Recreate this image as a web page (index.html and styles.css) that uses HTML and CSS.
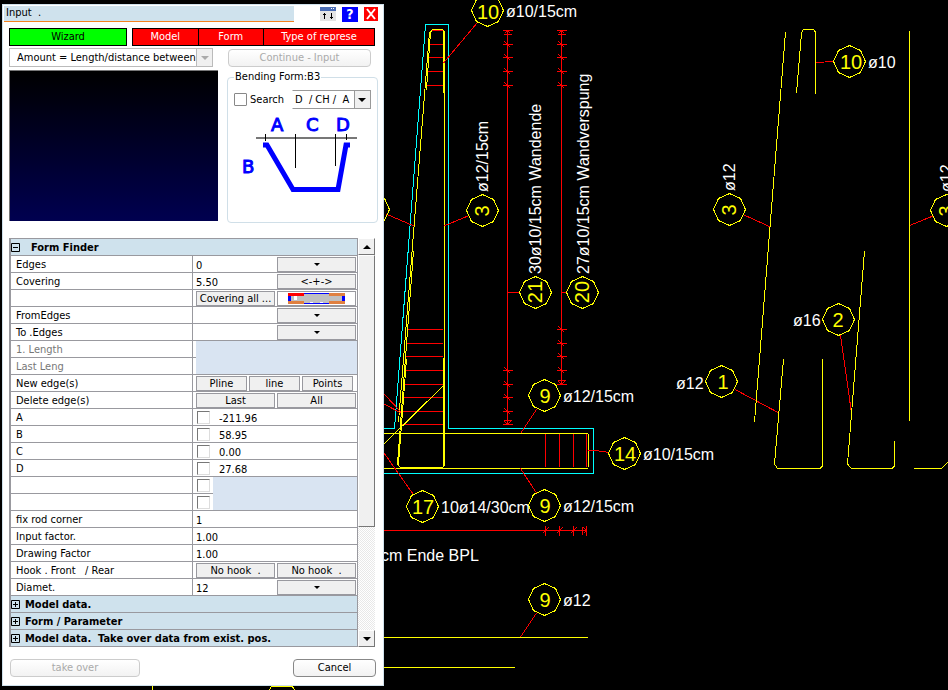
FILE: index.html
```html
<!DOCTYPE html>
<html lang="en">
<head>
    <meta charset="UTF-8">
    <meta name="viewport" content="width=device-width, initial-scale=1.0">
    <title>Input</title>
    <link rel="stylesheet" href="styles.css">
</head>
<body>
    <svg class="drawing" aria-label="Drawing">
        <defs>
            <path id="mark" d="M0-16L11-11L16 0L11 11L0 16L-11 11L-16 0L-11-11Z"/>
            <path id="tick" d="M-5 0H5M-3-3L3 3"/>
            <path id="tick-end" d="M-5 0H5M-4 4H4M-3 3L0 0L3 3"/>
        </defs>

        <!-- concrete outline -->
        <path class="cyan" d="M380 428.5H394.5L425.5 24.5H448.5V428.5H593.5V473.5H380"/>

        <!-- stirrups -->
        <path class="red" d="M431 30.5H443M429 44.5H443M428 57.5H443M427 71.5H443M426 85.5H443"/>
        <path class="red" d="M408 329.5H443M407 343.5H443M405 356.5H443M404 370.5H443M403 384.5H443M402 397.5H443M401 411.5H443M400 424.5H443"/>
        <path class="red" d="M545.5 434V467M559.5 434V467M573.5 434V467M586.5 434V467"/>

        <!-- bars in the section -->
        <path class="yellow" d="M429.5 32L398.5 422M444.5 32V466M443.5 32V93M443.5 358V467"/>
        <path class="yellow" d="M426.5 90L430.5 32L432.5 29.5H442.5L444.5 32"/>
        <path class="yellow" d="M413.5 251L397.5 464L400.5 467.5H442.5L444.5 465"/>
        <path class="yellow" d="M406.5 359L398.5 464"/>
        <path class="yellow" d="M380 433.5H588M380 468.5H588M588.5 434V467M384 444L443.5 385.5"/>

        <!-- leaders -->
        <path class="red" d="M477 23L443.5 63M468 216L444 226M386 214L414 226M384 394L401 412M384 404L401 413"/>
        <path class="red" d="M536.5 409.5L520.5 433.5M520.5 468.5L536.5 493M384 453L413 494M588 450.5H596L609 452.5M536.5 613L520.5 637"/>
        <path class="red" d="M815.5 62.5L834 61.5M744 215L770.5 227M909.5 225.5L933 216M840.5 335L851.5 413M735 389.5L779 413"/>

        <!-- dimension chains -->
        <path class="red" d="M507.5 30V424M561.5 30V384M507 292.5H519M561 292.5H567M380 530.5H587"/>
        <g class="red">
            <use href="#tick-end" x="507.5" y="30.5"/>
            <use href="#tick" x="507.5" y="44.5"/>
            <use href="#tick" x="507.5" y="57.5"/>
            <use href="#tick" x="507.5" y="71.5"/>
            <use href="#tick" x="507.5" y="85.5"/>
            <use href="#tick" x="507.5" y="370.5"/>
            <use href="#tick" x="507.5" y="384.5"/>
            <use href="#tick" x="507.5" y="397.5"/>
            <use href="#tick" x="507.5" y="411.5"/>
            <use href="#tick-end" transform="translate(507.5 424.5) scale(1 -1)"/>
            <use href="#tick-end" x="561.5" y="30.5"/>
            <use href="#tick" x="561.5" y="44.5"/>
            <use href="#tick" x="561.5" y="57.5"/>
            <use href="#tick" x="561.5" y="71.5"/>
            <use href="#tick" x="561.5" y="85.5"/>
            <use href="#tick" x="561.5" y="329.5"/>
            <use href="#tick" x="561.5" y="343.5"/>
            <use href="#tick" x="561.5" y="356.5"/>
            <use href="#tick" x="561.5" y="370.5"/>
            <use href="#tick-end" transform="translate(561.5 384.5) scale(1 -1)"/>
            <use href="#tick" transform="translate(545.5 530.5) rotate(-90)"/>
            <use href="#tick" transform="translate(559.5 530.5) rotate(-90)"/>
            <use href="#tick" transform="translate(573.5 530.5) rotate(-90)"/>
            <use href="#tick-end" transform="translate(586.5 530.5) rotate(90)"/>
        </g>

        <!-- bars drawn out -->
        <path class="yellow" d="M380 637.5H588M380 667.5H515M152.5 685V690M269.5 690L271.5 686.5H292.5L294.5 690"/>
        <path class="yellow" d="M785.5 32L754.5 422M909.5 31V421"/>
        <path class="yellow" d="M796.5 93L801.5 33L803.5 29.5H813.5L815.5 32V94"/>
        <path class="yellow" d="M783.5 359L774.5 464L777.5 468.5H820L822.5 466V359"/>
        <path class="yellow" d="M864.5 251L847.5 464L851.5 468.5H892L894.5 466V441"/>
        <path class="yellow" d="M914 468.5H941.5L949 461"/>

        <!-- position marks -->
        <g class="yellow">
            <use href="#mark" x="487.5" y="10.5"/>
            <use href="#mark" x="373.5" y="209.5"/>
            <use href="#mark" x="482.5" y="210.5"/>
            <use href="#mark" x="535.5" y="292.5"/>
            <use href="#mark" x="582.5" y="292.5"/>
            <use href="#mark" x="544.5" y="395.5"/>
            <use href="#mark" x="624.5" y="453.5"/>
            <use href="#mark" x="422.5" y="506.5"/>
            <use href="#mark" x="544.5" y="505.5"/>
            <use href="#mark" x="544.5" y="599.5"/>
            <use href="#mark" x="849.5" y="61.5"/>
            <use href="#mark" x="729.5" y="209.5"/>
            <use href="#mark" x="946.5" y="210.5"/>
            <use href="#mark" x="838.5" y="319.5"/>
            <use href="#mark" x="721.5" y="381.5"/>
        </g>
        <g class="pos">
            <text x="488" y="19">10</text>
            <text x="545" y="403">9</text>
            <text x="625" y="461">14</text>
            <text x="423" y="514">17</text>
            <text x="545" y="513">9</text>
            <text x="545" y="607">9</text>
            <text x="851" y="69">10</text>
            <text x="838" y="327">2</text>
            <text x="723" y="389">1</text>
            <text transform="translate(489 211) rotate(-90)">3</text>
            <text transform="translate(542 292) rotate(-90)">21</text>
            <text transform="translate(589 292) rotate(-90)">20</text>
            <text transform="translate(736 210) rotate(-90)">3</text>
            <text transform="translate(953 211) rotate(-90)">3</text>
        </g>
        <g class="note">
            <text x="506" y="17">ø10/15cm</text>
            <text x="563" y="402">ø12/15cm</text>
            <text x="643" y="460">ø10/15cm</text>
            <text x="441" y="513">10ø14/30cm</text>
            <text x="563" y="512">ø12/15cm</text>
            <text x="381" y="561">cm Ende BPL</text>
            <text x="563" y="606">ø12</text>
            <text x="868" y="68">ø10</text>
            <text x="793" y="326">ø16</text>
            <text x="676" y="389">ø12</text>
            <text transform="translate(488 192) rotate(-90)">ø12/15cm</text>
            <text transform="translate(541 274) rotate(-90)">30ø10/15cm Wandende</text>
            <text transform="translate(589 274) rotate(-90)">27ø10/15cm Wandverspung</text>
            <text transform="translate(735 191) rotate(-90)">ø12</text>
            <text transform="translate(952 192) rotate(-90)">ø12</text>
        </g>
    </svg>

    <div class="dialog">
        <div class="titlebar">
            <div class="title">Input&nbsp; .</div>
            <div class="title-buttons">
                <button class="roll" aria-label="Roll up">
                    <svg width="16" height="14"><path fill="#e4e4e4" d="M0 0H16V14H0Z"/><path fill="#4a6db5" d="M0 0H16V4H0Z"/><path fill="#fff" d="M11 1H12V2H11ZM13 1H14V2H13Z"/><path fill="#000" d="M4 6H5V12H4ZM3 7H6V8H3ZM11 6H12V12H11ZM10 10H13V11H10Z"/></svg>
                </button>
                <button class="help" aria-label="Help">?</button>
                <button class="close" aria-label="Close">
                    <svg width="14" height="14"><path stroke="#fff" stroke-width="2" d="M3 2L11 12M11 2L3 12"/></svg>
                </button>
            </div>
        </div>

        <div class="tabs">
            <button class="tab wizard">Wizard</button>
            <div class="tab-group">
                <button class="tab">Model</button>
                <button class="tab">Form</button>
                <button class="tab wide">Type of represe</button>
            </div>
        </div>

        <div class="top">
            <div class="left">
                <div class="combo disabled">
                    <select aria-label="Amount"><option>Amount = Length/distance between</option></select>
                    <span class="arrow"></span>
                </div>
                <div class="preview"></div>
            </div>
            <div class="right">
                <button class="button" disabled>Continue - Input</button>
                <fieldset class="bending">
                    <legend>Bending Form:B3</legend>
                    <div class="search">
                        <input type="checkbox" id="search">
                        <label for="search">Search</label>
                        <div class="combo">
                            <select aria-label="Shape"><option>D&nbsp; / CH /&nbsp; A</option></select>
                            <span class="arrow"></span>
                        </div>
                    </div>
                    <svg class="shape" width="130" height="84" viewBox="0 0 130 84">
                        <path stroke="#777" stroke-width="2" d="M20 27H121"/>
                        <path stroke="#000" d="M29.500 23V30M59.500 23V57M99.500 23V55M110.500 23V29"/>
                        <path fill="none" stroke="#00f" stroke-width="5" d="M27 34H31L57 78.500H102L110 34H114"/>
                        <text x="35" y="20">A</text>
                        <text x="70" y="20">C</text>
                        <text x="100" y="20">D</text>
                        <text x="6" y="62">B</text>
                    </svg>
                </fieldset>
            </div>
        </div>

        <div class="grid">
            <table>
                <colgroup><col class="names"><col></colgroup>
                <tr class="category"><th colspan="2"><button class="toggle open"><svg width="9" height="9"><path d="M.5 .5H8.500V8.500H.5ZM2 4.500H7"/></svg>Form Finder</button></th></tr>
                <tr>
                    <td><label for="edges">Edges</label></td>
                    <td><div class="cell"><input type="text" id="edges" value="0"><button class="small" aria-label="Edges list"><i></i></button></div></td>
                </tr>
                <tr>
                    <td><label for="covering">Covering</label></td>
                    <td><div class="cell"><input type="text" id="covering" value="5.50"><button class="small">&lt;-+-&gt;</button></div></td>
                </tr>
                <tr>
                    <td></td>
                    <td><div class="cell"><button class="small">Covering all ...</button><button class="small image" aria-label="Covering picture">
                        <svg width="57" height="11"><path fill="#c0c0c0" d="M0 0H57V11H0Z"/><path fill="#f00" d="M0 0H16V3H0Z"/><path fill="#e08040" d="M41 0H57V3H41ZM0 8H16V11H0ZM41 8H57V11H41Z"/><path fill="#00f" d="M0 3H3V8H0ZM54 3H57V8H54ZM16 0H41V1H16ZM16 10H41V11H16Z"/><path fill="#fff" d="M6 3H9V7H6ZM22 9H25V10H22ZM32 9H35V10H32Z"/></svg>
                    </button></div></td>
                </tr>
                <tr>
                    <td><label for="from">FromEdges</label></td>
                    <td><div class="cell"><input type="text" id="from"><button class="small" aria-label="From list"><i></i></button></div></td>
                </tr>
                <tr>
                    <td><label for="to">To .Edges</label></td>
                    <td><div class="cell"><input type="text" id="to"><button class="small" aria-label="To list"><i></i></button></div></td>
                </tr>
                <tr class="off"><td>1. Length</td><td><div class="cell"><span class="fill join"></span></div></td></tr>
                <tr class="off"><td>Last Leng</td><td><div class="cell"><span class="fill"></span></div></td></tr>
                <tr>
                    <td>New edge(s)</td>
                    <td><div class="cell three"><button class="small">Pline</button><button class="small">line</button><button class="small">Points</button></div></td>
                </tr>
                <tr>
                    <td>Delete edge(s)</td>
                    <td><div class="cell"><button class="small">Last</button><button class="small">All</button></div></td>
                </tr>
                <tr>
                    <td><label for="a">A</label></td>
                    <td><div class="cell check"><input type="checkbox" aria-label="Lock A"><input type="text" id="a" value="-211.96"></div></td>
                </tr>
                <tr>
                    <td><label for="b">B</label></td>
                    <td><div class="cell check"><input type="checkbox" aria-label="Lock B"><input type="text" id="b" value="58.95"></div></td>
                </tr>
                <tr>
                    <td><label for="c">C</label></td>
                    <td><div class="cell check"><input type="checkbox" aria-label="Lock C"><input type="text" id="c" value="0.00"></div></td>
                </tr>
                <tr>
                    <td><label for="d">D</label></td>
                    <td><div class="cell check"><input type="checkbox" aria-label="Lock D"><input type="text" id="d" value="27.68"></div></td>
                </tr>
                <tr><td></td><td><div class="cell check"><input type="checkbox" aria-label="Lock 5"><span class="fill join"></span></div></td></tr>
                <tr><td></td><td><div class="cell check"><input type="checkbox" aria-label="Lock 6"><span class="fill"></span></div></td></tr>
                <tr>
                    <td><label for="corner">fix rod corner</label></td>
                    <td><div class="cell"><input type="text" id="corner" value="1"></div></td>
                </tr>
                <tr>
                    <td><label for="factor">Input factor.</label></td>
                    <td><div class="cell"><input type="text" id="factor" value="1.00"></div></td>
                </tr>
                <tr>
                    <td><label for="drawfactor">Drawing Factor</label></td>
                    <td><div class="cell"><input type="text" id="drawfactor" value="1.00"></div></td>
                </tr>
                <tr>
                    <td>Hook . Front &nbsp; / Rear</td>
                    <td><div class="cell"><button class="small">No hook &nbsp;.</button><button class="small">No hook &nbsp;.</button></div></td>
                </tr>
                <tr>
                    <td><label for="diamet">Diamet.</label></td>
                    <td><div class="cell"><input type="text" id="diamet" value="12"><button class="small" aria-label="Diameter list"><i></i></button></div></td>
                </tr>
                <tr class="category"><th colspan="2"><button class="toggle"><svg width="9" height="9"><path d="M.5 .5H8.500V8.500H.5ZM2 4.500H7M4.500 2V7"/></svg>Model data.</button></th></tr>
                <tr class="category"><th colspan="2"><button class="toggle"><svg width="9" height="9"><path d="M.5 .5H8.500V8.500H.5ZM2 4.500H7M4.500 2V7"/></svg>Form / Parameter</button></th></tr>
                <tr class="category"><th colspan="2"><button class="toggle"><svg width="9" height="9"><path d="M.5 .5H8.500V8.500H.5ZM2 4.500H7M4.500 2V7"/></svg>Model data.&nbsp; Take over data from exist. pos.</button></th></tr>
            </table>
            <div class="scrollbar">
                <button aria-label="Scroll up"><i class="up"></i></button>
                <div class="thumb"></div>
                <button class="last" aria-label="Scroll down"><i></i></button>
            </div>
        </div>

        <div class="footer">
            <button class="button take" disabled>take over</button>
            <button class="button cancel">Cancel</button>
        </div>
    </div>
</body>
</html>
```

FILE: styles.css
```css
* {
    box-sizing: border-box;
}

body {
    margin: 0;
    padding: 4px 2px;
    min-height: 100vh;
    background-color: #000;
    color: #000;
    font-family: "DejaVu Sans Condensed", "DejaVu Sans", sans-serif;
    font-size: 11px;
    line-height: 16px;
}

button,
input,
select {
    margin: 0;
    padding: 0;
    border: 0;
    font: inherit;
    color: inherit;
}

svg {
    display: block;
}

/* drawing behind the dialog */

.drawing {
    position: absolute;
    top: 0;
    left: 0;
    width: 100%;
    height: 100%;
    font-family: "Liberation Sans", Arial, sans-serif;
}

.cyan,
.red,
.yellow {
    fill: none;
    stroke-width: 1px;
    shape-rendering: crispEdges;
}

.cyan {
    stroke: #0ff;
}

.red {
    stroke: #f00;
}

.yellow {
    stroke: #ff0;
}

.pos {
    fill: #ff0;
    font-size: 20px;
    text-anchor: middle;
}

.note {
    fill: #fff;
    font-size: 16px;
}

/* dialog */

.dialog {
    position: relative;
    width: 382px;
    padding: 1px 0 8px;
    background-color: #fff;
    border: 1px solid #cfe1ec;
}

.titlebar {
    display: flex;
    justify-content: space-between;
    padding: 0 5px 0 1px;
}

.title {
    width: 290px;
    height: 16px;
    padding-left: 2px;
    line-height: 14px;
    background-color: #cfe2ed;
    border-bottom: 1px solid #f58220;
}

.title-buttons {
    display: flex;
    gap: 6px;
    padding-top: 1px;
}

.help {
    width: 16px;
    height: 15px;
    background-color: #00f;
    color: #fff;
    font-size: 14px;
    font-weight: bold;
    line-height: 15px;
}

.roll {
    height: 14px;
}

.close {
    height: 14px;
    background-color: #f00;
}

.tabs {
    display: flex;
    gap: 5px;
    padding: 6px 8px 0 6px;
}

.tab {
    flex: 1;
    height: 18px;
    background-color: #f00;
    border: 1px solid #000;
    color: #fff;
    line-height: 16px;
}

.tab.wizard {
    flex: 0 0 118px;
    background-color: #0f0;
    color: #000;
}

.tab-group {
    display: flex;
    flex: 1;
}

.tab-group .tab + .tab {
    border-left: 0;
}

.tab-group .wide {
    flex: 0 0 111px;
}

.top {
    display: flex;
    gap: 9px;
    padding: 2px 5px 0 6px;
}

.left {
    width: 209px;
    flex-shrink: 0;
}

.right {
    flex: 1;
    min-width: 0;
}

.combo {
    display: flex;
    height: 19px;
    border: 1px solid #999;
    border-left-color: #fff;
}

.combo select {
    flex: 1;
    min-width: 0;
    appearance: none;
    background-color: #fff;
    padding-left: 2px;
}

.combo .arrow {
    display: flex;
    align-items: center;
    justify-content: center;
    width: 16px;
    background-color: #f0f0f0;
    border-left: 1px solid #999;
}

.arrow::before {
    content: "";
    border: 4px solid transparent;
    border-top-color: #000;
    border-bottom: 0;
}

.combo.disabled {
    width: 204px;
    border-color: #bbb;
}

.disabled select {
    padding-left: 7px;
}

.disabled .arrow {
    border-color: #bbb;
}

.disabled .arrow::before {
    border-top-color: #aaa;
}

.preview {
    height: 151px;
    margin-top: 3px;
    border-top: 1px solid #777;
    border-left: 1px solid #777;
    background: linear-gradient(#000, #000050);
}

.button {
    width: 143px;
    height: 18px;
    background: linear-gradient(#fff, #f2f2f2);
    border: 1px solid #888;
    border-radius: 4px;
    line-height: 16px;
}

.button:disabled {
    color: #aaa;
    border-color: #ccc;
}

.right .button {
    display: block;
    margin: 1px 0 0 1px;
}

.bending {
    margin: 2px 0 0;
    padding: 5px 6px 6px;
    border: 1px solid #d0dfe8;
    border-radius: 4px;
    height: 154px;
}

.bending legend {
    padding: 0 1px;
}

.search {
    display: flex;
    align-items: center;
    gap: 3px;
}

.search .combo {
    width: 79px;
    margin-left: 5px;
}

input[type="checkbox"] {
    appearance: none;
    width: 13px;
    height: 13px;
    background-color: #fff;
    border: 1px solid #888;
    border-radius: 1px;
}

.shape {
    margin: 2px 0 0 2px;
}

.shape text {
    fill: #00f;
    stroke: #00f;
    font: 18px "DejaVu Sans", sans-serif;
}

/* property grid */

.grid {
    display: flex;
    margin: 15px 8px 0 6px;
}

table {
    flex: 1;
    table-layout: fixed;
    border-spacing: 0;
    border-top: 1px solid #99999f;
    border-left: 2px solid #99999f;
}

.names {
    width: 182px;
}

td,
th {
    height: 17px;
    padding: 0;
    border-right: 1px solid #99999f;
    border-bottom: 1px solid #99999f;
    line-height: 14px;
    text-align: left;
    white-space: nowrap;
}

td:first-child {
    padding: 2px 0 0 5px;
}

.category th {
    background-color: #cfe2ed;
}

.toggle {
    display: flex;
    align-items: center;
    gap: 5px;
    height: 16px;
    padding-top: 2px;
    background: none;
    font-weight: bold;
}

.toggle svg {
    margin-bottom: 2px;
}

.toggle.open {
    gap: 11px;
}

.toggle path {
    fill: none;
    stroke: #000;
}

.off {
    color: #777;
}

.cell {
    display: grid;
    grid-template-columns: 1fr 1fr;
    align-items: center;
    gap: 2px;
    height: 16px;
    padding: 0 1px 0 3px;
}

.cell input[type="text"] {
    width: 100%;
    height: 16px;
    padding-top: 2px;
    background: none;
}

.three {
    grid-template-columns: repeat(3, 51px);
}

.check {
    grid-template-columns: 13px 1fr;
    gap: 3px;
    padding-left: 4px;
}

.check input[type="text"] {
    padding-left: 6px;
}

.check input[type="checkbox"] {
    border: 1px solid #ddd;
    border-top-color: #777;
    border-left-color: #777;
    border-radius: 0;
}

.fill {
    grid-column: 1 / 3;
    align-self: start;
    height: 16px;
    margin-right: -1px;
    background-color: #d9e4f2;
}

.check .fill {
    grid-column: 2;
}

.fill.join {
    height: 17px;
}

.small {
    display: flex;
    align-items: center;
    justify-content: center;
    height: 15px;
    background-color: #f0f0f0;
    border: 1px solid #99999f;
    line-height: 13px;
}

.small.image {
    background-color: #fff;
}

.small i,
.scrollbar i {
    border: 3px solid transparent;
    border-top-color: #000;
    border-bottom: 0;
}

.scrollbar {
    display: flex;
    flex-direction: column;
    width: 17px;
    background: repeating-conic-gradient(#fff 0 25%, #e8e8e8 0 50%) 0 0 / 2px 2px;
}

.scrollbar button,
.thumb {
    background-color: #f0f0f0;
    border: 1px solid #fff;
    border-right-color: #777;
    border-bottom-color: #777;
}

.scrollbar button {
    display: flex;
    align-items: center;
    justify-content: center;
    height: 17px;
}

.scrollbar i {
    border-width: 4px;
    border-bottom: 0;
}

.scrollbar .up {
    border: 4px solid transparent;
    border-top: 0;
    border-bottom-color: #000;
}

.thumb {
    height: 272px;
}

.scrollbar .last {
    margin-top: auto;
}

.footer {
    display: flex;
    justify-content: space-between;
    padding: 12px 7px 0;
}

.take {
    width: 130px;
}

.cancel {
    width: 83px;
}
```
